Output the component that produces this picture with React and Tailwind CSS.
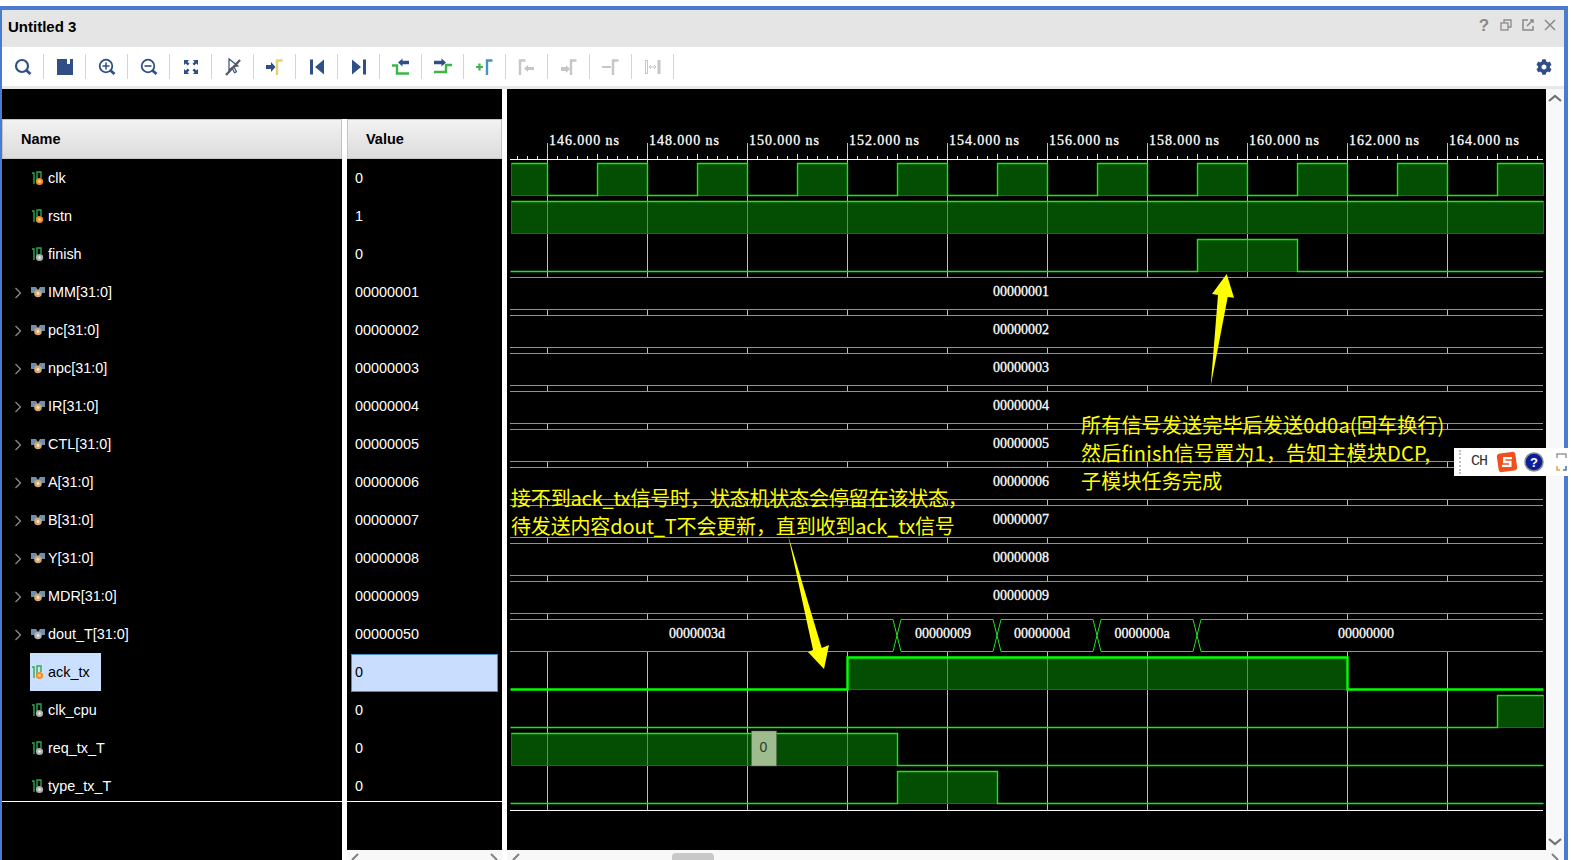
import React from 'react';
import { FaCog } from 'react-icons/fa';

const BLUE = '#2f4f86';
const GREEN = '#3db54a';
const GRAY = '#c6c6c6';
const LINE = '#20e020';

const signals = [
  { name: 'clk', value: '0', dot: '#f0902a' },
  { name: 'rstn', value: '1', dot: '#f0902a' },
  { name: 'finish', value: '0', dot: '#b0b0b0' },
  { name: 'IMM[31:0]', value: '00000001', bus: true, dot: '#d8a868' },
  { name: 'pc[31:0]', value: '00000002', bus: true, dot: '#d8a868' },
  { name: 'npc[31:0]', value: '00000003', bus: true, dot: '#d8a868' },
  { name: 'IR[31:0]', value: '00000004', bus: true, dot: '#d8a868' },
  { name: 'CTL[31:0]', value: '00000005', bus: true, dot: '#d8a868' },
  { name: 'A[31:0]', value: '00000006', bus: true, dot: '#d8a868' },
  { name: 'B[31:0]', value: '00000007', bus: true, dot: '#d8a868' },
  { name: 'Y[31:0]', value: '00000008', bus: true, dot: '#d8a868' },
  { name: 'MDR[31:0]', value: '00000009', bus: true, dot: '#d8a868' },
  { name: 'dout_T[31:0]', value: '00000050', bus: true, dot: '#b0b0b0' },
  { name: 'ack_tx', value: '0', dot: '#f0902a', selected: true },
  { name: 'clk_cpu', value: '0', dot: '#b0b0b0' },
  { name: 'req_tx_T', value: '0', dot: '#b0b0b0' },
  { name: 'type_tx_T', value: '0', dot: '#b0b0b0' },
];

const WAVE_START = 510;
const WAVE_END = 1543;
const clkHighs = [[511, 547], ...[0, 1, 2, 3, 4, 5, 6, 7, 8].map((k) => [597 + k * 100, 647 + k * 100]), [1497, 1543]];

const digitalRows = [
  { row: 0, highs: clkHighs },
  { row: 1, highs: [[511, 1543]] },
  { row: 2, highs: [[1197, 1297]] },
  { row: 13, highs: [[847, 1347]], thick: true },
  { row: 14, highs: [[1497, 1543]] },
  { row: 15, highs: [[511, 897]] },
  { row: 16, highs: [[897, 997]] },
];

const gridXs = [547, 647, 747, 847, 947, 1047, 1147, 1247, 1347, 1447];
const minorTicks = [];
for (let x = 517; x < WAVE_END; x += 10) minorTicks.push(x);

function rowTop(i) {
  return 163 + 38 * i;
}

function wavePoints(hi, lo, highs) {
  const pts = [];
  let cursor = WAVE_START;
  highs.forEach(([a, b]) => {
    if (a > 511) pts.push([cursor, lo], [a, lo]);
    pts.push([a, hi], [b, hi]);
    if (b < WAVE_END) pts.push([b, lo]);
    cursor = b;
  });
  if (cursor < WAVE_END) pts.push([WAVE_END, lo]);
  return pts.map((p) => `${p[0] + 0.5},${p[1] + 0.5}`).join(' ');
}

function DigitalWave({ row, highs, thick }) {
  const hi = rowTop(row);
  const lo = hi + 32;
  return (
    <g>
      {highs.map(([a, b]) => (
        <rect key={a} x={a + 0.5} y={hi + 0.5} width={b - a} height={32} fill="#058205" fillOpacity="0.6" stroke="#0b7a0b" />
      ))}
      <polyline points={wavePoints(hi, lo, highs)} fill="none" stroke={thick ? '#00ff00' : '#12ee12'} strokeWidth={thick ? 2.4 : 1.4} />
    </g>
  );
}

function WaveText({ x, y, children }) {
  return (
    <text x={x} y={y} textAnchor="middle" fill="#fff" stroke="#fff" strokeWidth="0.3" className="font-['Liberation_Serif'] text-[14px]">
      {children}
    </text>
  );
}

function BusWave({ row, label }) {
  const top = rowTop(row);
  return (
    <g>
      <rect x={WAVE_START} y={top} width={WAVE_END - WAVE_START + 1} height={32} fill="#000" />
      <line x1={WAVE_START} x2={WAVE_END} y1={top + 0.5} y2={top + 0.5} stroke={LINE} />
      <line x1={WAVE_START} x2={WAVE_END} y1={top + 32.5} y2={top + 32.5} stroke={LINE} />
      <WaveText x={1021} y={top + 19}>
        {label}
      </WaveText>
    </g>
  );
}

function DoutWave() {
  const top = rowTop(12);
  const bot = top + 32;
  const cross = [897, 997, 1097, 1197];
  const labels = [
    ['0000003d', 697],
    ['00000009', 943],
    ['0000000d', 1042],
    ['0000000a', 1142],
    ['00000000', 1366],
  ];
  return (
    <g>
      <rect x={WAVE_START} y={top} width={WAVE_END - WAVE_START + 1} height={32} fill="#000" />
      {cross.map((x) => (
        <path
          key={x}
          d={`M${x - 4} ${top + 0.5}L${x + 4} ${bot + 0.5}M${x - 4} ${bot + 0.5}L${x + 4} ${top + 0.5}`}
          stroke={LINE}
          fill="none"
        />
      ))}
      {[
        [WAVE_START, 893],
        [901, 993],
        [1001, 1093],
        [1101, 1193],
        [1201, WAVE_END],
      ].map(([a, b]) => (
        <path key={a} d={`M${a} ${top + 0.5}H${b}M${a} ${bot + 0.5}H${b}`} stroke={LINE} />
      ))}
      {labels.map(([t, x]) => (
        <WaveText key={x} x={x} y={top + 19}>
          {t}
        </WaveText>
      ))}
    </g>
  );
}

function Waveform() {
  return (
    <svg width="1039" height="761" viewBox="507 89 1039 761" className="block shrink-0 bg-black">
      {/* ruler */}
      {gridXs.map((x) => (
        <line key={x} x1={x + 0.5} x2={x + 0.5} y1="143" y2="810" stroke="#c0c0c0" />
      ))}
      {minorTicks.map((x) => (
        <line key={x} x1={x + 0.5} x2={x + 0.5} y1={(x - 547) % 50 === 0 ? 154 : 156} y2="159" stroke="#e0e0e0" />
      ))}
      <line x1={WAVE_START} x2={WAVE_END} y1="159.5" y2="159.5" stroke="#fff" />
      {gridXs.map((x, k) => (
        <text
          key={x}
          x={x + 2}
          y="145"
          fill="#fff"
          stroke="#fff"
          strokeWidth="0.3"
          textLength="70"
          lengthAdjust="spacing"
          className="font-['Liberation_Serif'] text-[14px]"
        >
          {146 + k * 2}.000 ns
        </text>
      ))}

      {digitalRows.map((r) => (
        <DigitalWave key={r.row} {...r} />
      ))}
      {signals.map((s, i) => (s.bus && i < 12 ? <BusWave key={s.name} row={i} label={s.value} /> : null))}
      <DoutWave />

      {/* cursor value */}
      <rect x="751.5" y="731" width="25" height="35" fill="#9fbc8f" stroke="#5a6a55" strokeOpacity="0.5" />
      <text x="763.5" y="752" textAnchor="middle" fill="#2b3a2b" className="font-['Liberation_Sans'] text-[14px]">
        0
      </text>

      <line x1={WAVE_START} x2={WAVE_END} y1="810.5" y2="810.5" stroke="#fff" />

      {/* annotation arrows */}
      <polygon points="1210.7,386 1218,295 1212,294 1226.7,274 1234,297.7 1227.7,297" fill="#ffff00" />
      <polygon points="788,535 813,650 808,652 824,669 829,645 821.7,648" fill="#ffff00" />
    </svg>
  );
}

function BitIcon({ dot }) {
  return (
    <svg width="14" height="16" viewBox="0 0 14 16" className="shrink-0">
      <path d="M1 3h2v11M6 12V2h4v6" fill="none" stroke="#2fa84f" strokeWidth="1.4" />
      <circle cx="8.5" cy="11.5" r="3.6" fill={dot} />
      <circle cx="8.5" cy="11.5" r="1.3" fill={dot === '#b0b0b0' ? '#eeeeee' : '#ffe0b0'} />
    </svg>
  );
}

function BusIcon({ dot }) {
  return (
    <svg width="14" height="16" viewBox="0 0 14 16" className="shrink-0">
      <path d="M0 3h5l2 3 2-3h5v6H9l-2-1-2 1H0z" fill="#6f8fb0" />
      <circle cx="7" cy="9.5" r="3.8" fill={dot} />
      <circle cx="7" cy="9.5" r="1.4" fill="#e8e8e8" />
    </svg>
  );
}

function NameRow({ signal }) {
  return (
    <div className="h-[38px] flex items-center relative">
      {signal.bus && (
        <svg width="8" height="12" viewBox="0 0 8 12" className="absolute left-[12px] top-[14px]">
          <path d="M1.5 1l5 5-5 5" fill="none" stroke="#8a8a8a" strokeWidth="1.3" />
        </svg>
      )}
      <div
        className={`ml-[28px] h-[38px] flex items-center gap-[2px] pr-[11px] ${
          signal.selected ? 'bg-[#cbdffe] text-black' : 'text-white'
        }`}
      >
        <div className="w-[16px] flex justify-center">{signal.bus ? <BusIcon dot={signal.dot} /> : <BitIcon dot={signal.dot} />}</div>
        <span className="text-[14.4px] leading-none">{signal.name}</span>
      </div>
    </div>
  );
}

function ValueRow({ signal }) {
  if (signal.selected) {
    return (
      <div className="h-[38px] px-[4px] pt-[1px]">
        <div className="h-[38px] bg-[#c9deff] border border-[#4a90c8] text-black text-[14.4px] flex items-center pl-[3px]">{signal.value}</div>
      </div>
    );
  }
  return <div className="h-[38px] pl-[8px] pt-[2px] flex items-center text-white text-[14.4px]">{signal.value}</div>;
}

function HeaderCell({ children, pad }) {
  return (
    <div
      className={`h-[40px] shrink-0 flex items-center pt-[2px] ${pad} bg-gradient-to-b from-[#f2f2f2] to-[#dcdcdc] border border-[#c4c4c4] font-bold text-[14.5px] text-black`}
    >
      {children}
    </div>
  );
}

function Chevron({ dir, className }) {
  const d = {
    up: 'M2 9l6-5 6 5',
    down: 'M2 4l6 5 6-5',
  }[dir];
  return (
    <svg width="16" height="12" viewBox="0 0 16 12" className={className}>
      <path d={d} fill="none" stroke="#707070" strokeWidth="2.2" />
    </svg>
  );
}

function Bracket({ color, x = 12 }) {
  return <path d={`M${x} 18V3.5h5.5`} fill="none" stroke={color} strokeWidth="2.4" />;
}

const toolIcons = [
  <>
    <circle cx="9" cy="9" r="6" fill="none" stroke={BLUE} strokeWidth="2.2" />
    <path d="M13.5 13.5l4 3.5" stroke={BLUE} strokeWidth="2.8" />
  </>,
  <path d="M2 2h10v5h3V2h3v16H2z" fill={BLUE} />,
  <>
    <circle cx="9" cy="9" r="6.3" fill="none" stroke={BLUE} strokeWidth="1.8" />
    <path d="M5.5 9h7M9 5.5v7" stroke={BLUE} strokeWidth="1.5" />
    <path d="M13.5 13.5l4 3.5" stroke={BLUE} strokeWidth="2.8" />
  </>,
  <>
    <circle cx="9" cy="9" r="6.3" fill="none" stroke={BLUE} strokeWidth="1.8" />
    <path d="M5.5 9h7" stroke={BLUE} strokeWidth="1.6" />
    <path d="M13.5 13.5l4 3.5" stroke={BLUE} strokeWidth="2.8" />
  </>,
  <>
    <path d="M3 3h5L6.5 4.7 8.5 6.7 6.7 8.5 4.7 6.5 3 8z" fill={BLUE} />
    <path d="M17 3h-5l1.5 1.7-2 2 1.8 1.8 2-2L17 8z" fill={BLUE} />
    <path d="M3 17h5l-1.5-1.7 2-2-1.8-1.8-2 2L3 12z" fill={BLUE} />
    <path d="M17 17h-5l1.5-1.7-2-2 1.8-1.8 2 2L17 12z" fill={BLUE} />
  </>,
  <>
    <path d="M6 2l9 7-4 .7 2.5 5-2 1-2.5-5L6 13z" fill="none" stroke={BLUE} strokeWidth="1.2" />
    <path d="M3 18L17 3" stroke="#5a5a5a" strokeWidth="2.4" />
  </>,
  <>
    <polygon points="1,8 6,8 6,5 10.5,10 6,15 6,12 1,12" fill={BLUE} />
    <Bracket color="#e8d070" />
  </>,
  <>
    <rect x="3" y="2.5" width="3" height="15" fill={BLUE} />
    <polygon points="17,2.5 8,10 17,17.5" fill={BLUE} />
  </>,
  <>
    <rect x="14" y="2.5" width="3" height="15" fill={BLUE} />
    <polygon points="3,2.5 12,10 3,17.5" fill={BLUE} />
  </>,
  <>
    <path d="M1 8.5h5v8h12" fill="none" stroke={GREEN} strokeWidth="2.4" />
    <polygon points="7,5.5 11.5,1.5 11.5,3.8 18,3.8 18,7.2 11.5,7.2 11.5,9.5" fill={BLUE} />
  </>,
  <>
    <path d="M1 15h12V8h6" fill="none" stroke={GREEN} strokeWidth="2.4" />
    <polygon points="13,5.5 8.5,1.5 8.5,3.8 1,3.8 1,7.2 8.5,7.2 8.5,9.5" fill={BLUE} />
  </>,
  <>
    <path d="M1 10h7M4.5 6.5v7" stroke={GREEN} strokeWidth="2.2" />
    <Bracket color="#4a90c0" />
  </>,
  <>
    <Bracket color={GRAY} x={3} />
    <polygon points="7,11.5 11,8 11,10 17,10 17,13 11,13 11,15" fill={GRAY} />
  </>,
  <>
    <polygon points="2,10 7,10 7,8 11,12 7,16 7,14 2,14" fill={GRAY} />
    <Bracket color={GRAY} />
  </>,
  <>
    <path d="M1 10h9" stroke={GRAY} strokeWidth="2" />
    <Bracket color={GRAY} />
  </>,
  <>
    <rect x="2.5" y="3.5" width="2" height="13" fill="none" stroke={GRAY} />
    <path d="M6 10h7M6 10l2-2M6 10l2 2M13 10l-2-2M13 10l-2 2" fill="none" stroke={GRAY} />
    <rect x="14.5" y="3" width="3" height="14" fill={GRAY} />
  </>,
];

function WindowButtons() {
  return (
    <div className="flex pr-[3px] pt-[7px] text-[#8a8a8a]">
      <div className="w-[22px] h-[16px] flex items-center justify-center font-bold text-[17px] leading-none">?</div>
      <div className="w-[22px] h-[16px] flex items-center justify-center">
        <svg width="12" height="12" viewBox="0 0 12 12" fill="none" stroke="currentColor" strokeWidth="1.3">
          <rect x="1" y="4" width="7" height="7" />
          <path d="M4 4V1h7v7H8" />
        </svg>
      </div>
      <div className="w-[22px] h-[16px] flex items-center justify-center">
        <svg width="12" height="12" viewBox="0 0 12 12" fill="none" stroke="currentColor" strokeWidth="1.5">
          <path d="M6 1H1v10h10V7" />
          <path d="M5 7l6-6M8 1h3v3" />
        </svg>
      </div>
      <div className="w-[22px] h-[16px] flex items-center justify-center">
        <svg width="12" height="12" viewBox="0 0 12 12" fill="none" stroke="currentColor" strokeWidth="1.5">
          <path d="M1 1l10 10M11 1L1 11" />
        </svg>
      </div>
    </div>
  );
}

function ImeBar() {
  return (
    <div className="absolute left-[1454px] top-[448px] w-[114px] h-[28px] bg-white flex items-center">
      <div className="ml-[5px] w-[2px] h-[24px] border-l-2 border-dotted border-[#c0c0c0]" />
      <span className="ml-[10px] font-['Liberation_Mono'] text-[15px] text-[#333] tracking-[-1px] w-[18px]">CH</span>
      <svg width="22" height="22" viewBox="0 0 20 20" className="ml-[7px]">
        <rect x="1.5" y="1.5" width="17" height="17" rx="3" fill="#f0501e" transform="rotate(-8 10 10)" />
        <path d="M14.5 6.5H7.5v3.5h5.5v3.5H5.5" fill="none" stroke="#fff" strokeWidth="2.2" />
      </svg>
      <svg width="20" height="20" viewBox="0 0 20 20" className="ml-[6px]">
        <circle cx="10" cy="10" r="9" fill="#0a1e9a" stroke="#8a8a8a" strokeWidth="1.5" />
        <text x="10" y="15" textAnchor="middle" fill="#fff" className="font-['Liberation_Sans'] font-bold text-[13px]">
          ?
        </text>
      </svg>
      <svg width="12" height="20" viewBox="0 0 12 20" className="ml-[12px]">
        <path d="M1 6V2h9v4" fill="none" stroke="#999" strokeWidth="1.5" />
        <path d="M1 14v4h3" fill="none" stroke="#f0a040" strokeWidth="1.5" />
        <path d="M7 18h3v-4" fill="none" stroke="#4a70b0" strokeWidth="1.5" />
      </svg>
    </div>
  );
}

export default function App() {
  return (
    <div className="relative w-[1571px] h-[860px] overflow-hidden bg-white pt-[6px] font-['Liberation_Sans',sans-serif]">
      <div className="w-[1568px] h-[854px] border-t-4 border-l-2 border-r-4 border-[#4a7bce] flex flex-col">
        {/* title bar */}
        <div className="h-[37px] shrink-0 bg-[#e5e5e5] flex justify-between">
          <div className="pl-[6px] pt-[8px] text-[15px] leading-[18px] font-bold text-black">Untitled 3</div>
          <WindowButtons />
        </div>

        {/* toolbar */}
        <div className="h-[39px] shrink-0 bg-white flex items-center justify-between">
          <div className="flex items-center">
            {toolIcons.map((icon, i) => (
              <div key={i} className="w-[42px] h-[25px] border-r border-[#d4d4d4] flex items-center justify-center">
                <svg width="20" height="20" viewBox="0 0 20 20">
                  {icon}
                </svg>
              </div>
            ))}
          </div>
          <FaCog className="mr-[12px] text-[16px] text-[#2f4f86]" />
        </div>
        <div className="h-[3px] shrink-0 bg-[#e8e8e8]" />

        {/* main */}
        <div className="flex-1 flex min-h-0">
          <div className="w-[505px] shrink-0 flex flex-col">
            <div className="w-[500px] h-[30px] shrink-0 bg-black" />
            <div className="flex-1 flex gap-[5px] min-h-0">
              <div className="w-[340px] shrink-0 bg-black">
                <HeaderCell pad="pl-[18px]">Name</HeaderCell>
                <div className="h-[642px] overflow-hidden border-b border-white box-content">
                  {signals.map((s) => (
                    <NameRow key={s.name} signal={s} />
                  ))}
                </div>
              </div>
              <div className="w-[155px] shrink-0 flex flex-col">
                <HeaderCell pad="pl-[18px]">Value</HeaderCell>
                <div className="flex-1 bg-black">
                  <div className="h-[642px] overflow-hidden border-b border-white box-content">
                    {signals.map((s) => (
                      <ValueRow key={s.name} signal={s} />
                    ))}
                  </div>
                </div>
                <div className="h-[10px] shrink-0 bg-[#f8f8f8] flex justify-between items-end px-[4px] overflow-hidden">
                  <svg width="10" height="8" viewBox="0 0 10 8">
                    <path d="M1 8l6-6" stroke="#808080" strokeWidth="2" />
                  </svg>
                  <svg width="10" height="8" viewBox="0 0 10 8">
                    <path d="M9 8L3 2" stroke="#808080" strokeWidth="2" />
                  </svg>
                </div>
              </div>
            </div>
          </div>

          <div className="w-[1057px] shrink-0 flex flex-col">
            <div className="h-[761px] shrink-0 flex">
              <Waveform />
              <div className="w-[18px] bg-[#f8f8f8] flex flex-col justify-between items-center py-[3px]">
                <Chevron dir="up" />
                <Chevron dir="down" />
              </div>
            </div>
            <div className="relative h-[10px] flex justify-between items-end px-[5px] bg-[#f8f8f8] overflow-hidden">
              <svg width="10" height="8" viewBox="0 0 10 8">
                <path d="M1 8l6-6" stroke="#808080" strokeWidth="2" />
              </svg>
              <div className="absolute left-[165px] top-[3px] w-[42px] h-[10px] rounded-[4px] bg-[#c8c8c8]" />
              <svg width="10" height="8" viewBox="0 0 10 8">
                <path d="M9 8L3 2" stroke="#808080" strokeWidth="2" />
              </svg>
            </div>
          </div>
        </div>
      </div>

      {/* annotations drawn over the waveform */}
      <div className="absolute left-[511px] top-[484px] text-[20px] leading-[28px] tracking-[-0.16px] text-[#ffff00] whitespace-nowrap font-['Noto_Sans_CJK_SC',sans-serif]">
        <div>接不到ack_tx信号时，状态机状态会停留在该状态，</div>
        <div>待发送内容dout_T不会更新，直到收到ack_tx信号</div>
      </div>
      <div className="absolute left-[1081px] top-[411px] text-[20px] leading-[28px] tracking-[0.2px] text-[#ffff00] whitespace-nowrap font-['Noto_Sans_CJK_SC',sans-serif]">
        <div>所有信号发送完毕后发送0d0a(回车换行)</div>
        <div>然后finish信号置为1，告知主模块DCP,</div>
        <div>子模块任务完成</div>
      </div>

      <ImeBar />
    </div>
  );
}
